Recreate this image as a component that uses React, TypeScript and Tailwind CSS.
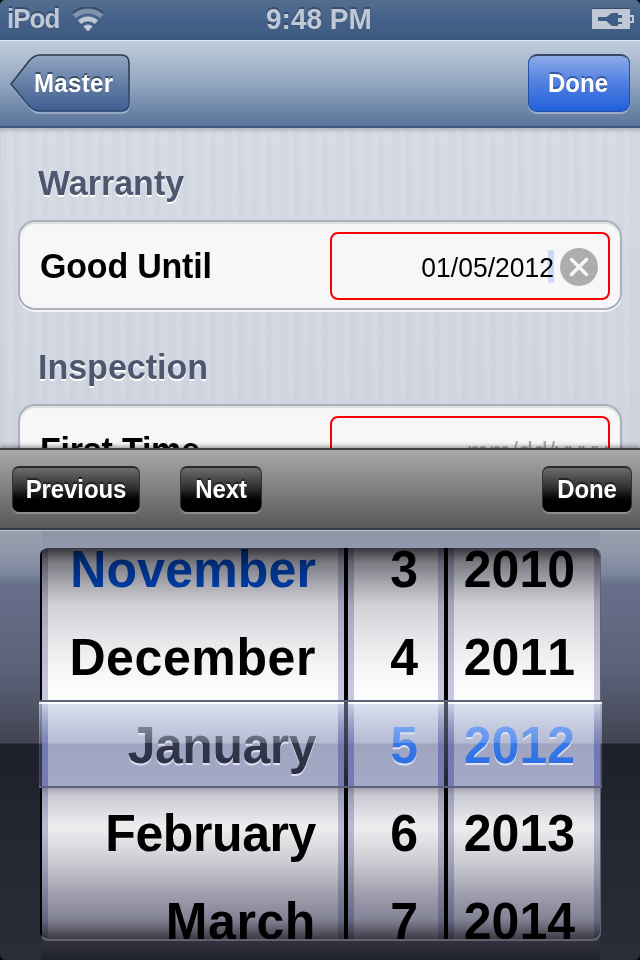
import React from "react";

const font = "font-['Liberation_Sans',Arial,sans-serif]";

function T({ children, className = "" }: { children: React.ReactNode; className?: string }) {
  return <span className={`inline-block scale-y-[1.045] whitespace-nowrap ${className}`}>{children}</span>;
}

function StatusBar() {
  return (
    <header className="relative flex h-10 items-start justify-between rounded-t-[5px] bg-linear-to-b from-[#546e90] via-[#45618a] to-[#3c5a80] pr-[6px] pl-[7px] text-[#bfc8d4] [text-shadow:0_-2px_0_#344c6c]">
      <div className="flex items-start">
        <T className="mt-[1px] w-[53px] text-[26px]/[36px] font-bold tracking-[-1px]">iPod</T>
        <svg className="mt-[7px] ml-3 h-6 w-8" viewBox="0 0 32 24">
          <path d="M1.8 7.2a21 21 0 0 1 28.4 0" fill="none" stroke="#344c6c" strokeWidth="5" />
          <path d="M2.3 9.4a20 20 0 0 1 27.4 0" fill="none" stroke="#8094ae" strokeWidth="5" />
          <path d="M7.6 15.2a12.2 12.2 0 0 1 16.8 0" fill="none" stroke="#bfc8d4" strokeWidth="4.8" />
          <path d="M11.4 19.4a6.6 6.6 0 0 1 9.2 0L17 23.4a1.4 1.4 0 0 1-2 0z" fill="#bfc8d4" />
        </svg>
      </div>
      <T className="absolute top-[1px] left-[266px] text-[28px]/[37px] font-bold">9:48 PM</T>
      <svg className="mt-[7px] h-6 w-[42px]" viewBox="0 0 42 24">
        <path d="M0 3V1h38v2" fill="#344c6c" />
        <rect y="2" width="38" height="20" rx="1" fill="#bfc8d4" />
        <path d="M38 9h3v6h-3" fill="none" stroke="#bfc8d4" strokeWidth="2" />
        <path d="M6 10h8q1 0 3-2t4-2h5v2h4v3h-4v4h4v2h-4v2h-5q-2 0-4-2.500t-3-2.500H6z" fill="#405d83" />
      </svg>
    </header>
  );
}

function NavBar() {
  return (
    <nav className="flex h-[88px] items-start justify-between border-t border-b-2 border-t-[#e6ecf3] border-b-[#3c5a82] bg-linear-to-b from-[#c0cddd] via-[#93a6c0] to-[#59749a] pt-[13px] pr-[10px] pl-[10px]">
      <button className="relative h-[60px] w-[120px] text-left">
        <svg className="absolute inset-0 h-full w-full" viewBox="0 0 120 60">
          <defs>
            <linearGradient id="back" x1="0" y1="0" x2="0" y2="1">
              <stop offset="0" stopColor="#93a5c1" />
              <stop offset=".5" stopColor="#647fa6" />
              <stop offset="1" stopColor="#3e5f92" />
            </linearGradient>
            <linearGradient id="backEdge" x1="0" y1="0" x2="0" y2="1">
              <stop offset="0" stopColor="#303844" />
              <stop offset="1" stopColor="#2f4a75" />
            </linearGradient>
          </defs>
          <path d="M1 31 19 8Q24 2 30 2H111Q119 2 119 10V51Q119 59 111 59H30Q24 59 19 53Z" fill="none" stroke="#a2b3ca" strokeWidth="1.5" />
          <path d="M1 30 19 7Q24 1 30 1H111Q119 1 119 9V49Q119 57 111 57H30Q24 57 19 52Z" fill="url(#back)" stroke="url(#backEdge)" strokeWidth="1.6" />
        </svg>
        <T className="relative pl-6 text-[24px]/[58px] font-bold tracking-[.35px] text-white [text-shadow:0_-2px_0_#3b4c66]">Master</T>
      </button>
      <button className="flex h-[58px] w-[102px] justify-center rounded-[9px] border border-t-2 border-[#2751a8] border-t-[#36466b] bg-linear-to-b from-[#8da9ea] via-[#4f7fe0] to-[#215fdc] shadow-[0_2px_0_#9cadc7]">
        <T className="-mt-px pr-[2px] text-[24px]/[57px] font-bold text-white [text-shadow:0_-2px_0_#3358a0]">Done</T>
      </button>
    </nav>
  );
}

function Section({ title, label, children }: { title: string; label: string; children: React.ReactNode }) {
  return (
    <section className="mb-[31px] px-[18px]">
      <h2 className="mb-[13px] pl-5 text-[34px]/[50px] font-bold text-[#4d576f] [text-shadow:0_2px_0_#fff]">
        <T>{title}</T>
      </h2>
      <div className="flex h-[90px] items-center justify-between rounded-[17px] border-2 border-[#abb0b9] bg-[#f7f7f7] pr-[10px] pl-5 shadow-[0_2px_0_#f3f5f8,inset_0_2px_1px_#dcdddd]">
        <T className="text-[34px]/[40px] font-bold tracking-[-.2px] text-black">{label}</T>
        <div className="mt-[2px] flex h-[68px] w-[280px] items-center justify-end rounded-lg border-2 border-[#fa0000]">{children}</div>
      </div>
    </section>
  );
}

function ClearIcon() {
  return (
    <svg className="mt-[2px] mr-[10px] ml-[6px] h-[38px] w-[38px]" viewBox="0 0 38 38">
      <circle cx="19" cy="19" r="19" fill="#adadad" />
      <path d="m11.500 11.500 15 15m0-15-15 15" stroke="#f7f7f7" strokeWidth="3.4" strokeLinecap="round" />
    </svg>
  );
}

function ToolButton({ children, className = "" }: { children: React.ReactNode; className?: string }) {
  return (
    <button className={`flex h-[46px] justify-center rounded-[7px] border-x border-t-2 border-x-[#303030] border-t-[#2a2a2a] bg-linear-to-b from-[#6d6d6d] via-[#303030] via-45% to-black to-85% shadow-[0_2px_0_#8d8d8d] ${className}`}>
      <T className="text-[24px]/[44px] font-bold tracking-[-.1px] text-white [text-shadow:0_-2px_0_#222]">{children}</T>
    </button>
  );
}

type Item = { text: string; tone?: string };

const darkChosen = "bg-[linear-gradient(#888d9b_24px,#5a6073_42px,#33374a_42px,#2c3044_68px)]";
const blueChosen = "bg-[linear-gradient(#7ba6f2_24px,#5d92ec_42px,#3678e6_42px,#2c6fe4_68px)]";

const months: Item[] = [
  { text: "November", tone: "tracking-[.15px] text-[#0055e0]" },
  { text: "December", tone: "tracking-[.6px] text-black" },
  { text: "January", tone: "tracking-[-.5px]" },
  { text: "February", tone: "tracking-[-.4px] text-black" },
  { text: "March", tone: "tracking-[.6px] text-black" },
];
const days: Item[] = [{ text: "3" }, { text: "4" }, { text: "5" }, { text: "6" }, { text: "7" }];
const years: Item[] = [{ text: "2010" }, { text: "2011" }, { text: "2012" }, { text: "2013" }, { text: "2014" }];

function Wheel({ items, chosen, className }: { items: Item[]; chosen: string; className: string }) {
  return (
    <div className={`h-full shrink-0 overflow-hidden border-x-6 border-[#c6c6dc] bg-[#fcfcfd] text-right font-bold [font-kerning:none] ${className}`}>
      <ul className="-mt-[23px]">
        {items.map(({ text, tone = "text-black" }, i) => (
          <li key={text} className={`h-[88px] text-[50px]/[88px] ${i === 2 ? "relative z-10" : "[text-shadow:0_2px_0_#fff]"}`}>
            <T className={i === 2 ? `bg-clip-text text-transparent drop-shadow-[0_2px_0_#dde1f0] ${chosen} ${tone === "text-black" ? "" : tone}` : tone}>{text}</T>
          </li>
        ))}
      </ul>
    </div>
  );
}

function Picker() {
  return (
    <div className="relative h-[430px] rounded-b-[5px] bg-[linear-gradient(to_bottom,#9aa2b1_0,#8e96a8_25px,#7c869d_43px,#666e89_56px,#646c87_75px,#5a6279_140px,#434452_213px,#1d1f2b_214px,#242631_300px,#2a2c38_430px)] pl-10">
      <div className="absolute top-0 left-[42px] h-[18px] w-[558px] bg-linear-to-b from-[#8c94a4] to-[#9299ae]" />
      <div className="absolute bottom-0 left-[42px] h-5 w-[558px] bg-linear-to-b from-[#34343f] to-[#1e202d]" />
      <div className="absolute top-0 left-0 h-px w-full bg-[#bfc6d2]" />
      <div className="relative top-[18px] flex h-[393px] w-[561px] overflow-hidden rounded-lg border-r border-b-2 border-[#62626e] bg-black pl-[2px]">
        <Wheel className="w-[302px] pr-[22px]" chosen={darkChosen} items={months} />
        <Wheel className="ml-1 w-24 pr-[20px]" chosen={blueChosen} items={days} />
        <Wheel className="ml-1 w-[152px] pr-[19px]" chosen={blueChosen} items={years} />
        <div className="absolute inset-x-0 top-0 h-[152px] bg-[linear-gradient(to_bottom,#37373c_0,#7c7c83_15px,#a6a6ad_34px,#d2d2d7_56px,#e5e5e8_83px,#f8f8fa_120px,#fff_140px)] mix-blend-multiply" />
        <div className="absolute inset-x-0 bottom-0 h-[152px] bg-[linear-gradient(to_bottom,#a4a4b2_0,#cbcbd4_8px,#f1f1f3_40px,#cdcdd3_76px,#a0a0af_108px,#858597_132px,#3d3d47_152px)] mix-blend-multiply" />
      </div>
      <div className="absolute top-[170px] left-[39px] h-[88px] w-[563px] border-y-2 border-[#58647a] bg-[linear-gradient(to_bottom,rgba(255,255,255,.95)_0,rgba(255,255,255,.95)_2px,rgba(204,213,233,.72)_2px,rgba(140,149,186,.63)_41px,rgba(86,96,144,.56)_42px,rgba(97,103,157,.56)_84px)] bg-clip-padding">
        <div className="absolute inset-y-0 left-[3px] w-[6px] bg-linear-to-b from-transparent to-[#6d70b0]/70 to-50%" />
        <div className="absolute inset-y-0 left-[299px] w-[6px] bg-linear-to-b from-transparent to-[#6d70b0]/70 to-50%" />
        <div className="absolute inset-y-0 left-[305px] w-1 bg-linear-to-b from-[#4e5366] to-[#212330]" />
        <div className="absolute inset-y-0 left-[309px] w-[6px] bg-linear-to-b from-transparent to-[#6d70b0]/70 to-50%" />
        <div className="absolute inset-y-0 left-[399px] w-[6px] bg-linear-to-b from-transparent to-[#6d70b0]/70 to-50%" />
        <div className="absolute inset-y-0 left-[405px] w-1 bg-linear-to-b from-[#4e5366] to-[#212330]" />
        <div className="absolute inset-y-0 left-[409px] w-[6px] bg-linear-to-b from-transparent to-[#6d70b0]/70 to-50%" />
        <div className="absolute inset-y-0 left-[555px] w-[6px] bg-linear-to-b from-transparent to-[#6d70b0]/70 to-50%" />
      </div>
    </div>
  );
}

export default function App() {
  return (
    <div className={`flex h-[960px] w-[640px] flex-col overflow-hidden bg-black ${font}`}>
      <StatusBar />
      <NavBar />
      <main className="h-[320px] overflow-hidden bg-[#d5d9e2] bg-[repeating-linear-gradient(90deg,rgba(190,198,214,.18)_0,rgba(190,198,214,.18)_7px,transparent_7px,transparent_14px),linear-gradient(#d8dce4,#d1d6e0)] pt-[29px] shadow-[inset_0_4px_4px_-2px_#a7acb5]">
        <Section title="Warranty" label="Good Until">
          <T className="relative mt-[4px] text-[26.500px]/[32px] text-black before:absolute before:-top-px before:right-0 before:-z-10 before:h-[31px] before:w-[6px] before:bg-[#ccd6f6]">01/05/2012</T>
          <ClearIcon />
        </Section>
        <Section title="Inspection" label="First Time">
          <T className="mt-[4px] text-[26.500px]/[32px] text-[#a9a9a9]">mm/dd/yyyy</T>
        </Section>
      </main>
      <div className="relative flex h-[82px] items-start border-y-2 border-t-[#3c3d3e] border-b-[#343c49] bg-linear-to-b from-[#a9a9a9] to-[#595959] px-3 pt-4 pr-2 shadow-[0_-2px_4px_rgba(0,0,0,.35)]">
        <ToolButton className="w-[128px]">Previous</ToolButton>
        <ToolButton className="ml-10 w-[82px]">Next</ToolButton>
        <ToolButton className="ml-auto w-[90px]">Done</ToolButton>
      </div>
      <Picker />
    </div>
  );
}
